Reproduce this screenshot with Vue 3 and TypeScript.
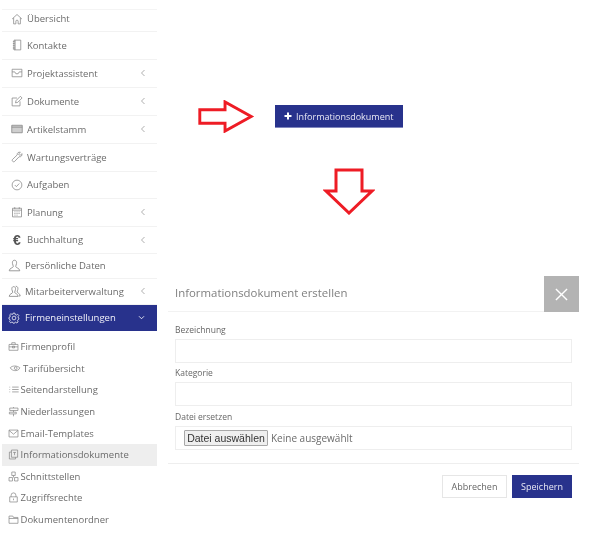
<script setup lang="ts">
interface NavItem {
  label: string;
  icon: string;
  chevron?: boolean;
  cls: string;
}

const items: NavItem[] = [
  { label: "Übersicht", icon: "M1.5 8L8 2L14.5 8M3.5 6.5V14.5H6.5V11A1.5 1.5 0 0 1 9.5 11V14.5H12.5V6.5", cls: "r-top" },
  { label: "Kontakte", icon: "M4 1.5H13V14.5H4ZM5.5 1.5V14.5M2.5 3.5H5M2.5 6H5M2.5 8.5H5M2.5 11H5M2.5 13H5", cls: "r-std" },
  { label: "Projektassistent", icon: "M1.5 3H14.5V13H1.5ZM1.5 6.5H5L6.5 9H9.5L11 6.5H14.5", chevron: true, cls: "r-std" },
  { label: "Dokumente", icon: "M12 8.5V14.5H1.5V4H8M6 10.5L6.7 7.5L12.5 1.7L14.8 4L9 9.8Z", chevron: true, cls: "r-std" },
  { label: "Artikelstamm", icon: "M1 3H15V13H1ZM1 5.5H15", chevron: true, cls: "r-fill" },
  { label: "Wartungsverträge", icon: "M14.5 3.5L12 6L10 4L12.5 1.8C10.3 .8 7.8 2.6 8.3 5.2L1.8 11.5C.8 13 3 15.2 4.5 14.2L10.8 7.7C13.3 8.2 15.3 6 14.5 3.5Z", cls: "r-std" },
  { label: "Aufgaben", icon: "M8 1.5A6.5 6.5 0 1 0 8 14.5A6.5 6.5 0 1 0 8 1.5ZM5 8L7.2 10.2L11 6", cls: "r-short" },
  { label: "Planung", icon: "M2 3H14V14.5H2ZM5 1.5V4M11 1.5V4M2 5.5H14M4.5 7.8H6M7.3 7.8H8.8M10 7.8H11.5M4.5 10H6M7.3 10H8.8M10 10H11.5M4.5 12.2H6M7.3 12.2H8.8", chevron: true, cls: "r-std" },
];
const items2: NavItem[] = [
  { label: "Persönliche Daten", icon: "M8 1.5C5.8 1.5 5.2 3.5 5.5 5.5C5.7 7 6.5 8 6.5 9.2C6.5 11 1.5 11.2 1.5 14.5H14.5C14.5 11.2 9.5 11 9.5 9.2C9.5 8 10.3 7 10.5 5.5C10.8 3.5 10.2 1.5 8 1.5Z", cls: "r-person" },
  { label: "Mitarbeiterverwaltung", icon: "M7 2C5 2 4.5 3.8 4.8 5.6C5 7 5.8 7.8 5.8 9C5.8 10.5 1.5 10.8 1.5 14H12.5C12.5 10.8 8.2 10.5 8.2 9C8.2 7.8 9 7 9.2 5.6C9.5 3.8 9 2 7 2ZM9.5 1.5C12 1.5 12.4 3.6 12.1 5.4C11.9 6.8 11.2 7.6 11.2 8.6C11.2 9.8 15 10.4 15 13.5H13.5", chevron: true, cls: "r-staff" },
];
const subItems: { label: string; icon: string; active?: boolean; wide?: boolean }[] = [
  { label: "Firmenprofil", icon: "M1.5 5H14.5V13.5H1.5ZM5.5 5V2.5H10.5V5M1.5 8.5H14.5M6.5 7.5H9.5V10H6.5Z" },
  { label: "Tarifübersicht", icon: "M1 7C4 3.5 11 3.5 15 7C14 10.5 10 11.5 7 11C5 10.7 2.5 9.5 1 7ZM7 7.5A2 2 0 1 0 11 7.5A2 2 0 1 0 7 7.5", wide: true },
  { label: "Seitendarstellung", icon: "M6 4.5H15.5M6 8H15.5M6 11.5H15.5M2.5 4V5M2.5 7.5V8.5M2.5 11V12" },
  { label: "Niederlassungen", icon: "M2.5 3H14.5V6.5H2.5ZM2 9H12V11.5H2ZM8 1.5V3M8 6.5V9M8 11.5V15" },
  { label: "Email-Templates", icon: "M1.5 3H14.5V13H1.5ZM1.5 3.5L8 9L14.5 3.5" },
  { label: "Informationsdokumente", icon: "M5 4.5H2V14.5H11V12M5 1.5H14V12H5ZM7.5 5H11.5M9.5 5V9", active: true },
  { label: "Schnittstellen", icon: "M5.5 1.5H10.5V6.5H5.5ZM1.5 9.5H6.5V14.5H1.5ZM9.5 9.5H14.5V14.5H9.5ZM8 6.5V9.5" },
  { label: "Zugriffsrechte", icon: "M2.5 7H13.5V14.5H2.5ZM4.5 7V4.8A3.5 3.5 0 0 1 11.5 4.8V7M8 9.5V12" },
  { label: "Dokumentenordner", icon: "M1.5 3H7L8 5H14.5V13.5H1.5ZM1.5 6.5H14.5" },
];
</script>

<template>
  <div class="page">
    <aside class="sidebar">
      <a v-for="item in items" :key="item.label" class="nav-row" :class="item.cls">
        <svg class="nav-icon" viewBox="0 0 16 16"><path :d="item.icon" /></svg>
        <span class="nav-label">{{ item.label }}</span>
        <svg v-if="item.chevron" class="chev" viewBox="0 0 6 8"><path d="M4.5 1L1.5 4L4.5 7" /></svg>
      </a>
      <a class="nav-row r-short">
        <span class="euro">€</span>
        <span class="nav-label">Buchhaltung</span>
        <svg class="chev" viewBox="0 0 6 8"><path d="M4.5 1L1.5 4L4.5 7" /></svg>
      </a>
      <a v-for="item in items2" :key="item.label" class="nav-row" :class="item.cls">
        <svg class="nav-icon" viewBox="0 0 16 16"><path :d="item.icon" /></svg>
        <span class="nav-label">{{ item.label }}</span>
        <svg v-if="item.chevron" class="chev" viewBox="0 0 6 8"><path d="M4.5 1L1.5 4L4.5 7" /></svg>
      </a>
      <a class="nav-row r-current">
        <svg class="nav-icon" viewBox="0 0 16 16">
          <path d="M6.8 1.5H9.2L9.6 3.4L11.2 4.1L12.9 3L14.5 4.8L13.3 6.4L13.9 8L14.5 8.2V9.5L13.3 10.2L12.7 11.6L13.5 13.2L11.8 14.6L10.2 13.5L9 14L8.6 15H7L6.6 13.9L5.2 13.4L3.5 14.4L2 12.8L3 11.2L2.4 9.8L1.3 9.3V7.2L2.5 6.8L3.1 5.3L2.2 3.8L3.9 2.3L5.4 3.3L6.5 2.9ZM8 5.5A2.5 2.5 0 1 0 8 10.5A2.5 2.5 0 1 0 8 5.5Z" />
        </svg>
        <span class="nav-label">Firmeneinstellungen</span>
        <svg class="chev-down" viewBox="0 0 8 6"><path d="M1 1.5L4 4.5L7 1.5" /></svg>
      </a>
      <ul class="sub">
        <li v-for="sub in subItems" :key="sub.label" :class="{ active: sub.active, wide: sub.wide }">
          <svg class="sub-icon" viewBox="0 0 16 16"><path :d="sub.icon" /></svg>
          <span>{{ sub.label }}</span>
        </li>
      </ul>
    </aside>

    <main class="content">
      <div class="hint-row">
        <svg class="arrow-right" viewBox="0 0 58 34">
          <path d="M2 10H28V2L55 17L28 32V24H2Z" />
        </svg>
        <button class="add-btn" type="button">
          <svg class="plus" viewBox="0 0 8 8"><path d="M4 .5V7.5M.5 4H7.5" /></svg>
          Informationsdokument
        </button>
      </div>
      <svg class="arrow-down" viewBox="0 0 52 47">
        <path d="M13 2H39V23H49L26 45L3 23H13Z" />
      </svg>

      <section class="modal">
        <header class="modal-head">
          <h2>Informationsdokument erstellen</h2>
          <button class="close" type="button" aria-label="Schließen">
            <svg viewBox="0 0 14 14"><path d="M1 1L13 13M13 1L1 13" /></svg>
          </button>
        </header>
        <div class="modal-body">
          <label>Bezeichnung</label>
          <div class="field"></div>
          <label>Kategorie</label>
          <div class="field"></div>
          <label class="file-label">Datei ersetzen</label>
          <div class="field file">
            <button type="button" class="file-btn">Datei auswählen</button>
            <span class="file-name">Keine ausgewählt</span>
          </div>
        </div>
        <footer class="modal-foot">
          <button type="button" class="btn cancel">Abbrechen</button>
          <button type="button" class="btn save">Speichern</button>
        </footer>
      </section>
    </main>
  </div>
</template>

<style>
html,
body {
  margin: 0;
  background: #fff;
}
</style>

<style scoped>
.page {
  display: flex;
  width: 613px;
  height: 545px;
  overflow: hidden;
  font-family: "Open Sans", sans-serif;
  color: #666;
  filter: blur(0.4px);
}

.sidebar {
  width: 155px;
  margin-left: 2px;
  padding-top: 9px;
  flex: none;
}

.nav-row {
  display: flex;
  align-items: center;
  box-sizing: border-box;
  height: 28px;
  padding: 0 0 1px 9px;
  border-bottom: 1px solid #f2f2f2;
  font-size: 9.5px;
  color: #6b6b6b;
}

.r-top {
  height: 23px;
  padding-bottom: 4px;
  border-top: 1px solid #f4f4f4;
}

.r-short {
  height: 27px;
}

.r-person {
  height: 25px;
  padding-left: 6px;
}

.r-staff {
  height: 26px;
  padding-left: 6px;
}

.nav-icon {
  width: 12px;
  height: 12px;
  flex: none;
  margin-right: 4px;
  fill: none;
  stroke: #858585;
  stroke-width: 1;
}

.r-person .nav-icon,
.r-staff .nav-icon {
  width: 13px;
  height: 13px;
}

.r-fill .nav-icon {
  fill: #cfcfcf;
  stroke: #808080;
}

.euro {
  width: 12px;
  margin-right: 4px;
  font-size: 14px;
  line-height: 14px;
  font-weight: 700;
  font-family: "Liberation Sans", sans-serif;
  color: #555;
  text-align: center;
}

.nav-label {
  flex: 1;
  white-space: nowrap;
}

.chev {
  width: 6px;
  height: 8px;
  margin-right: 11px;
  fill: none;
  stroke: #a5a5a5;
  stroke-width: 0.9;
}

.r-current {
  height: 26px;
  padding-left: 6px;
  background: #28328c;
  border-bottom: 0;
  color: #f0f0f8;
}

.r-current .nav-icon {
  margin-right: 5px;
  stroke: #fff;
}

.chev-down {
  width: 7px;
  height: 5px;
  margin-right: 12px;
  fill: none;
  stroke: #fff;
  stroke-width: 1;
}

.sub {
  list-style: none;
  margin: 5px 0 0;
  padding: 0;
}

.sub li {
  display: flex;
  align-items: center;
  height: 21.6px;
  padding-left: 6px;
  font-size: 9.5px;
  color: #6b6b6b;
  white-space: nowrap;
}

.sub li.active {
  background: #eee;
}

.sub li.wide .sub-icon {
  width: 14px;
  margin-right: 1px;
}

.sub-icon {
  width: 11px;
  height: 11px;
  flex: none;
  margin-right: 1.5px;
  fill: none;
  stroke: #808080;
  stroke-width: 1;
}

.content {
  flex: 1;
  padding: 100px 34px 0 11px;
  min-width: 0;
}

.hint-row {
  display: flex;
  align-items: center;
  margin-left: 29px;
  gap: 20px;
  height: 33px;
}

.arrow-right {
  width: 58px;
  height: 33px;
  flex: none;
  fill: #fff;
  stroke: #ee1c25;
  stroke-width: 3;
}

.add-btn {
  display: flex;
  align-items: center;
  gap: 4px;
  box-sizing: border-box;
  width: 128px;
  height: 23px;
  padding: 0 0 0 9px;
  border: none;
  border-bottom: 1px solid #7f85bd;
  background: #28328c;
  color: #e9e9f5;
  font-family: inherit;
  font-size: 9px;
  white-space: nowrap;
}

.plus {
  width: 8px;
  height: 8px;
  fill: none;
  stroke: #fff;
  stroke-width: 2;
}

.arrow-down {
  display: block;
  width: 52px;
  height: 47px;
  margin: 35px 0 0 155px;
  fill: #fff;
  stroke: #ee1c25;
  stroke-width: 3;
}

.modal {
  margin-top: 61px;
}

.modal-head {
  display: flex;
  align-items: center;
  justify-content: space-between;
  height: 36px;
}

.modal-head h2 {
  flex: 1;
  box-sizing: border-box;
  height: 36px;
  margin: 0;
  padding: 8px 0 0 7px;
  border-bottom: 1px solid #f2f2f2;
  font-size: 11.4px;
  font-weight: 400;
  line-height: 17px;
  color: #808080;
}

.close {
  width: 35px;
  height: 36px;
  flex: none;
  padding: 0;
  border: none;
  background: #b3b3b3;
  display: flex;
  align-items: center;
  justify-content: center;
}

.close svg {
  width: 13px;
  height: 13px;
  fill: none;
  stroke: #fff;
  stroke-width: 1.5;
}

.modal-body {
  padding: 10px 7px 0;
}

.modal-body label {
  display: block;
  height: 17px;
  font-size: 8.5px;
  line-height: 15px;
  color: #666;
}

.modal-body .file-label {
  height: 18px;
  line-height: 17px;
}

.field {
  box-sizing: border-box;
  height: 24px;
  margin-bottom: 2px;
  border: 1px solid #eee;
}

.file {
  display: flex;
  align-items: center;
  gap: 3px;
  padding-left: 8px;
  margin-bottom: 0;
}

.file-btn {
  box-sizing: border-box;
  width: 84px;
  height: 16px;
  padding: 0;
  border: 1px solid #a8a8a8;
  border-radius: 1px;
  background: #efefef;
  font-family: "Liberation Sans", sans-serif;
  font-size: 10.5px;
  color: #333;
}

.file-name {
  font-family: "Open Sans", sans-serif;
  font-size: 10px;
  color: #6b6b6b;
}

.modal-foot {
  display: flex;
  justify-content: flex-end;
  gap: 5px;
  margin-top: 13px;
  padding: 11px 7px 0;
  border-top: 1px solid #eee;
}

.btn {
  box-sizing: border-box;
  height: 23px;
  padding: 0;
  font-family: inherit;
  font-size: 9px;
}

.cancel {
  width: 65px;
  border: 1px solid #e6e6e6;
  background: #fff;
  color: #666;
}

.save {
  width: 60px;
  border: none;
  background: #28328c;
  color: #e9e9f5;
}
</style>
